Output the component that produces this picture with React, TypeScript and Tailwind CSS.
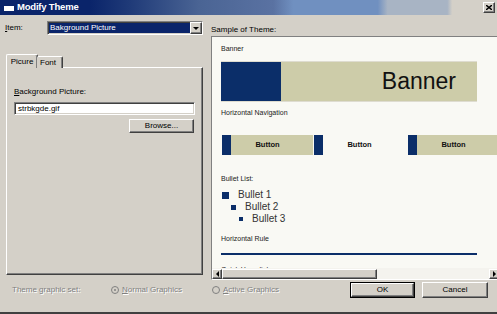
import React from "react";

const raised =
  "border border-t-white border-l-white border-r-[#404040] border-b-[#404040] shadow-[inset_-1px_-1px_#808080,inset_1px_1px_#d4d0c8]";
const sunken =
  "border border-t-[#808080] border-l-[#808080] border-r-white border-b-white shadow-[inset_1px_1px_#404040,inset_-1px_-1px_#d4d0c8]";
const disabled = "text-[#808080] [text-shadow:1px_1px_0_#ffffff]";

type Dir = "up" | "down" | "left" | "right";

function Arrow({ dir }: { dir: Dir }) {
  const points = {
    up: "0,3 6,3 3,0",
    down: "0,0 6,0 3,3",
    left: "3,0 3,6 0,3",
    right: "0,0 0,6 3,3",
  }[dir];
  const vertical = dir === "up" || dir === "down";
  return (
    <div
      className={`w-[10px] h-[10px] shrink-0 flex items-center justify-center bg-[#d4d0c8] ${raised}`}
    >
      <svg
        width={vertical ? 6 : 3}
        height={vertical ? 3 : 6}
        viewBox={vertical ? "0 0 6 3" : "0 0 3 6"}
      >
        <polygon points={points} fill="#000" />
      </svg>
    </div>
  );
}

function Label({ children }: { children: React.ReactNode }) {
  return <div className="h-[12px] leading-[12px] text-[7px] text-[#222]">{children}</div>;
}

function NavButton({ active }: { active?: boolean }) {
  return (
    <div
      className={`w-[91px] h-[20px] shrink-0 flex items-center justify-center text-[7.5px] font-bold text-[#111] shadow-[inset_9px_0_#0b2e69] ${
        active ? "bg-[#f9f9f4]" : "bg-[#cdcca9]"
      }`}
    >
      Button
    </div>
  );
}

function Bullet({ size, indent, text }: { size: number; indent: string; text: string }) {
  return (
    <div className={`h-[12px] flex items-center ${indent}`}>
      <div
        className="bg-[#0b2e69] shrink-0"
        style={{ width: size, height: size }}
      />
      <span className="ml-[9px] text-[10px] leading-[12px] text-[#333]">{text}</span>
    </div>
  );
}

function Preview() {
  return (
    <div className={`h-[244px] flex flex-col bg-[#d4d0c8] ${sunken}`}>
      <div className="flex flex-1 min-h-0">
        <div className="flex-1 overflow-hidden bg-[#f9f9f4] pl-[9px] pt-[6px]">
          <Label>Banner</Label>
          <div className="mt-[6px] h-[41px] w-[256px] flex border-y border-[#dedcd0]">
            <div className="w-[60px] bg-[#0b2e69]" />
            <div className="flex-1 bg-[#cdcca9] flex items-center justify-end pr-[21px] text-[23px] text-[#111]">
              Banner
            </div>
          </div>
          <div className="mt-[5px]">
            <Label>Horizontal Navigation</Label>
          </div>
          <div className="mt-[16px] ml-[1px] flex gap-[1px]">
            <NavButton />
            <NavButton active />
            <div className="w-[1px] shrink-0" />
            <NavButton />
          </div>
          <div className="mt-[18px]">
            <Label>Bullet List:</Label>
          </div>
          <div className="mt-[4px]">
            <Bullet size={7} indent="pl-[1px]" text="Bullet 1" />
            <Bullet size={5} indent="pl-[10px]" text="Bullet 2" />
            <Bullet size={4} indent="pl-[18px]" text="Bullet 3" />
          </div>
          <div className="mt-[8px]">
            <Label>Horizontal Rule</Label>
          </div>
          <div className="mt-[8px] h-[2px] w-[256px] bg-[#0b2e69]" />
          <div className="mt-[9px]">
            <Label>Quick Hyperlinks</Label>
          </div>
        </div>
        <div className="w-[10px] flex flex-col bg-[#f4f3ee]">
          <Arrow dir="up" />
          <div className={`h-[65px] bg-[#d4d0c8] ${raised}`} />
          <div className="flex-1" />
          <Arrow dir="down" />
        </div>
      </div>
      <div className="h-[11px] flex">
        <div className="flex-1 flex bg-[#f4f3ee] pt-[1px]">
          <Arrow dir="left" />
          <div className={`w-[155px] h-[10px] bg-[#d4d0c8] ${raised}`} />
          <div className="flex-1" />
          <Arrow dir="right" />
        </div>
        <div className="w-[10px] bg-[#d4d0c8]" />
      </div>
    </div>
  );
}

export default function App() {
  return (
    <div className="w-[497px] h-[314px] flex flex-col bg-[#d4d0c8] font-['Liberation_Sans',Arial,sans-serif] text-[8px] text-black overflow-hidden border-b-2 border-b-[#404040]">
      {/* title bar */}
      <div className="h-[15px] shrink-0 flex items-center pl-[3px] pr-[2px] bg-[linear-gradient(to_right,#0a246a_0%,#0a246a_18%,#1f3a78_26%,#4a6494_40%,#5a72a2_55%,#7090c0_59%,#7090c0_76%,#a8b4c4_78%,#a8b4c4_90%,#d4d0c8_91%)]">
        <div className="w-[12px] h-[9px] bg-white border border-[#0a246a] border-t-[3px]" />
        <span className="ml-[2px] text-[9.5px] font-bold text-white tracking-[-0.2px]">
          Modify Theme
        </span>
        <div
          className={`ml-auto w-[12px] h-[11px] flex items-center justify-center bg-[#d4d0c8] ${raised}`}
        >
          <svg width="6" height="5" viewBox="0 0 6 5">
            <path d="M0 0L6 5M6 0L0 5" stroke="#000" strokeWidth="1.4" />
          </svg>
        </div>
      </div>

      {/* main area */}
      <div className="h-[260px] shrink-0 flex gap-[8px] px-[5px] pt-[6px]">
        <div className="w-[199px] flex flex-col">
          <div className="h-[14px] flex items-center">
            <span className="w-[42px]">
              <span className="underline">I</span>tem:
            </span>
            <div className={`flex-1 h-[14px] flex items-center bg-white ${sunken}`}>
              <div className="flex-1 h-[10px] ml-[1px] flex items-center bg-[#0a246a] text-white pl-[1px]">
                Bakground Picture
              </div>
              <div className={`w-[12px] h-[12px] flex items-center justify-center bg-[#d4d0c8] ${raised}`}>
                <svg width="6" height="3" viewBox="0 0 6 3">
                  <polygon points="0,0 6,0 3,3" fill="#000" />
                </svg>
              </div>
            </div>
          </div>

          {/* tabs */}
          <div className="mt-[19px] ml-[1px] h-[14px] flex items-end relative z-10">
            <div className="h-[14px] w-[32px] flex items-center justify-center bg-[#d4d0c8] border-l border-t border-t-white border-l-white border-r border-r-[#404040] rounded-t-[2px] shadow-[inset_-1px_0_#808080]">
              Picure
            </div>
            <div className="h-[12px] w-[26px] -ml-[1px] flex items-center pl-[3px] bg-[#d4d0c8] border-t border-t-white border-r border-r-[#404040] rounded-t-[2px] shadow-[inset_-1px_0_#808080]">
              Font
            </div>
          </div>
          <div className={`-mt-[1px] ml-[1px] w-[197px] h-[210px] bg-[#d4d0c8] px-[7px] pt-[18px] ${raised}`}>
            <div className="h-[11px] leading-[11px]">
              <span className="underline">B</span>ackground Picture:
            </div>
            <div className={`mt-[5px] w-[181px] h-[13px] flex items-center bg-white pl-[3px] ${sunken}`}>
              strbkgde.gif
            </div>
            <div className="flex justify-end pr-[1px] mt-[4px]">
              <div className={`w-[65px] h-[14px] flex items-center justify-center bg-[#d4d0c8] ${raised}`}>
                Browse...
              </div>
            </div>
          </div>
        </div>

        <div className="flex-1 flex flex-col">
          <div className="mt-[2px] h-[13px] leading-[13px]">Sample of Theme:</div>
          <Preview />
        </div>
      </div>

      {/* bottom row */}
      <div className="mt-[7px] h-[16px] shrink-0 flex items-center pl-[12px] pr-[9px]">
        <span className={`w-[99px] ${disabled}`}>Theme graphic set:</span>
        <div className="w-[101px] flex items-center">
          <div className="w-[8px] h-[8px] rounded-full border border-[#808080] bg-[#d4d0c8] flex items-center justify-center">
            <div className="w-[2px] h-[2px] rounded-full bg-[#808080]" />
          </div>
          <span className={`ml-[3px] ${disabled}`}>
            <span className="underline">N</span>ormal Graphics
          </span>
        </div>
        <div className="flex-1 flex items-center">
          <div className="w-[8px] h-[8px] rounded-full border border-[#808080] bg-[#d4d0c8]" />
          <span className={`ml-[3px] ${disabled}`}>
            <span className="underline">A</span>ctive Graphics
          </span>
        </div>
        <div className="w-[65px] h-[16px] border border-black bg-[#d4d0c8]">
          <div className={`w-full h-full flex items-center justify-center ${raised}`}>OK</div>
        </div>
        <div className={`ml-[7px] w-[66px] h-[16px] flex items-center justify-center bg-[#d4d0c8] ${raised}`}>
          Cancel
        </div>
      </div>
    </div>
  );
}
